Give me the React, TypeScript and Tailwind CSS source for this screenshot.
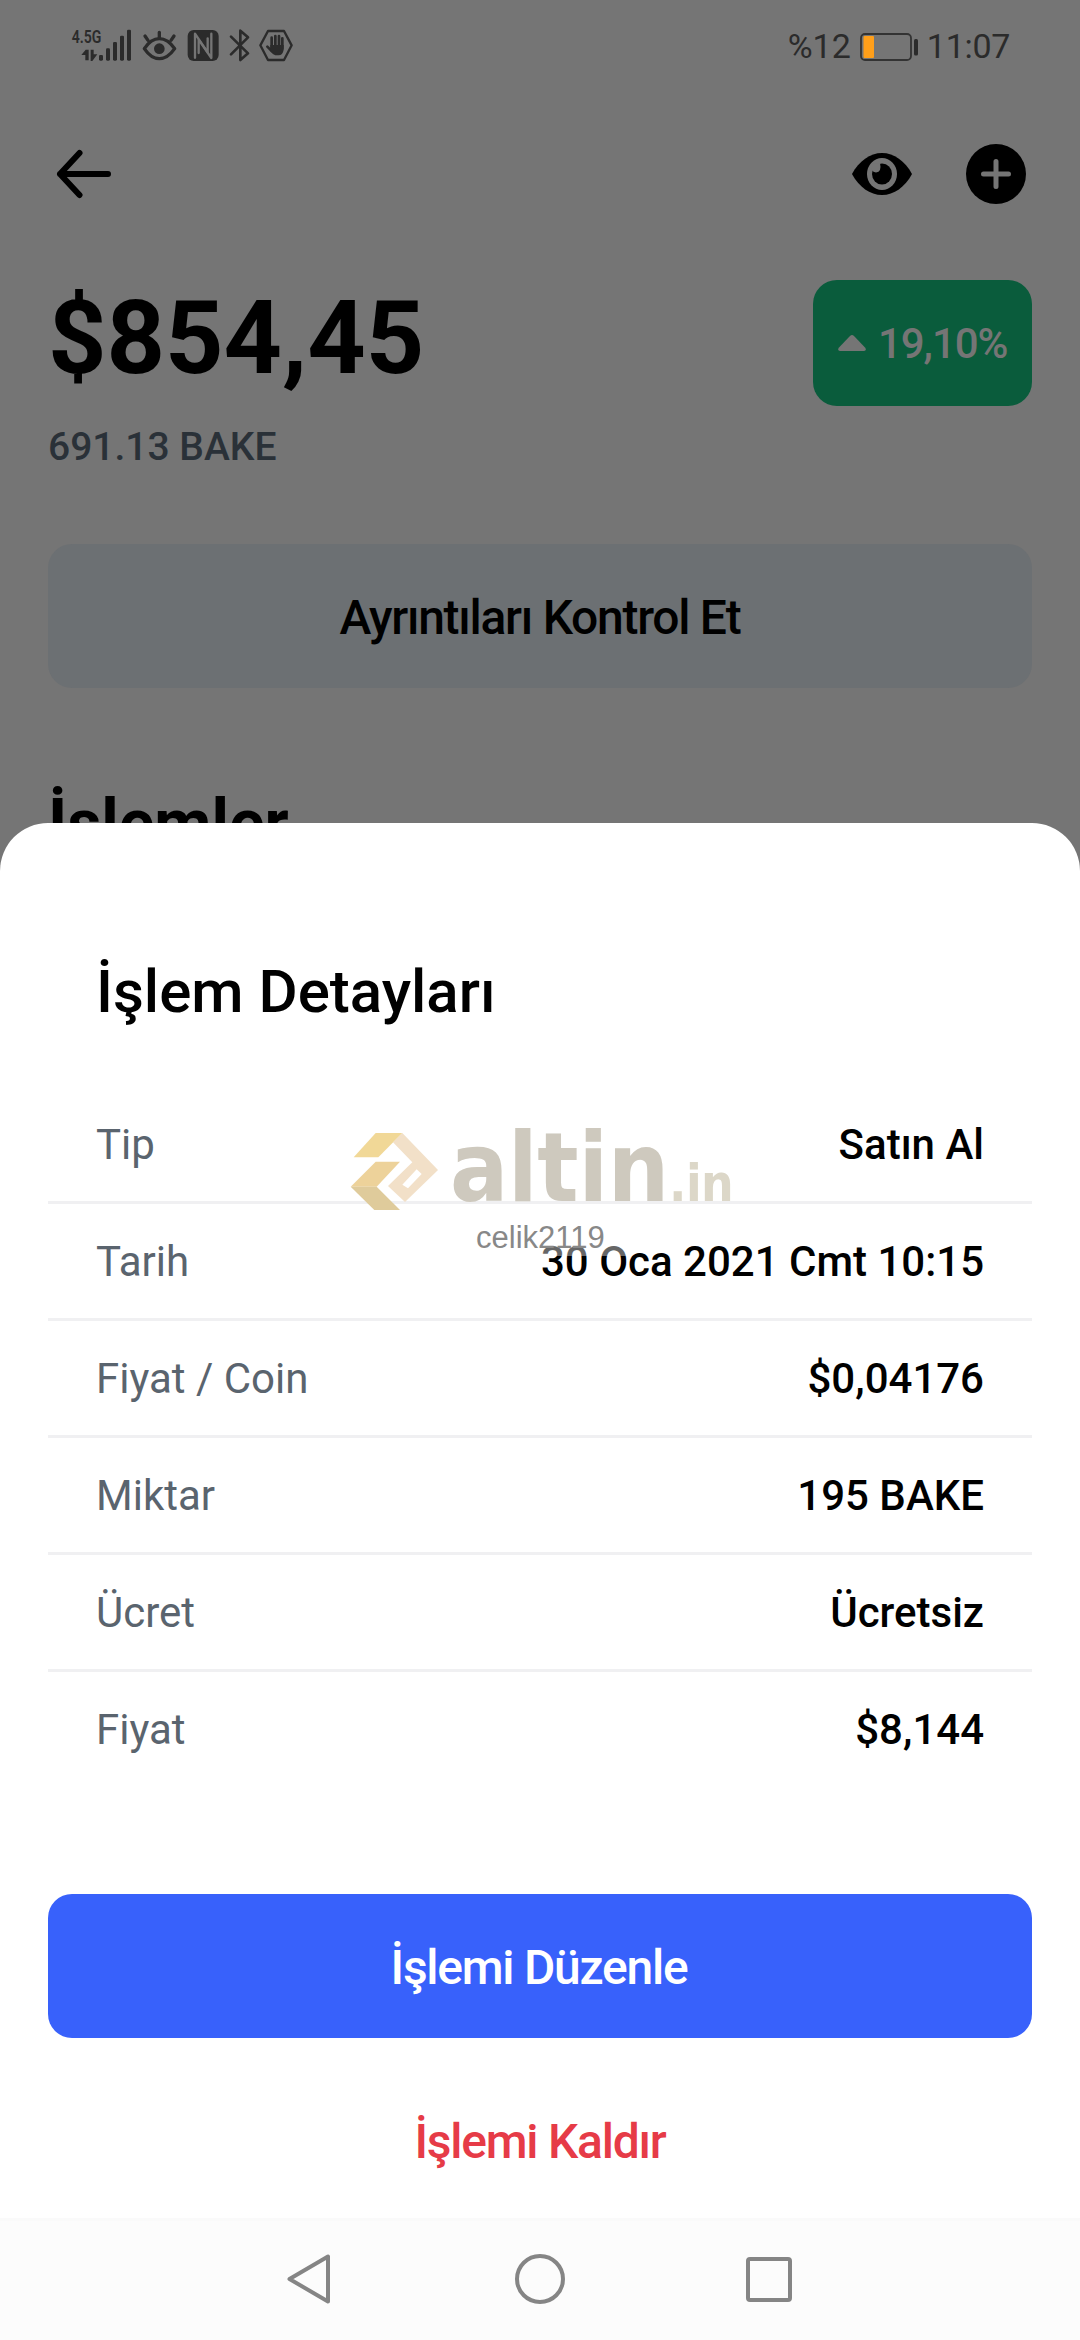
function StatusIcons() {
  return (
    <svg className="h-[47px] w-[227px]" viewBox="60 35 681 141" fill="none" stroke="#2b2b2b" strokeLinecap="round" strokeLinejoin="round">
      <text x="65" y="99" textLength="89" lengthAdjust="spacingAndGlyphs" fill="#2b2b2b" stroke="none" className="font-['Roboto'] font-semibold text-[57px]">4.5G</text>
      <g fill="#2b2b2b" stroke="none">
        <path d="M94 134 L107 118 H116 V150 H106 V134 Z" />
        <path d="M122 118 H131 V132 H142 L127 152 H122 Z" />
        <rect x="147" y="134" width="12" height="17" rx="4" />
        <rect x="168" y="114" width="12" height="37" rx="4" />
        <rect x="189" y="95" width="12" height="56" rx="4" />
        <rect x="210" y="76" width="12" height="75" rx="4" />
        <rect x="231" y="58" width="12" height="93" rx="4" />
      </g>
      <g strokeWidth="10">
        <path d="M283 115 Q303 85 328 85 Q353 85 374 115 Q353 145 328 145 Q303 145 283 115 Z" />
        <path d="M285 77 L294 90 M328 66 V82 M372 77 L363 90" />
        <circle cx="328" cy="115" r="16" fill="#2b2b2b" stroke="none" />
      </g>
      <rect x="413" y="59" width="93" height="93" rx="18" fill="#2b2b2b" stroke="none" />
      <path d="M435 142 V70 L473 126 V84" stroke="#757575" strokeWidth="7" />
      <path d="M484 70 V143 L446 88 V128" stroke="#757575" strokeWidth="7" />
      <path d="M543 79 L594 129 L571 149 V61 L594 81 L543 132" strokeWidth="8" />
      <path d="M631 105 L654 62 H702 L725 105 L702 149 H654 Z" strokeWidth="7" />
      <path d="M665 82 V112 M676 77 V108 M687 77 V108 M697 84 V114 M652 109 L666 123" strokeWidth="8" />
      <path d="M661 104 H701 V118 Q698 135 686 135 H676 Q668 133 661 122 Z" fill="#2b2b2b" stroke="none" />
    </svg>
  );
}

function Battery() {
  return (
    <svg className="ml-[9px] h-7 w-[59px]" viewBox="0 0 59 28" fill="none">
      <rect x="1" y="1" width="50" height="26" rx="4" stroke="#333" strokeWidth="1.8" />
      <rect x="3.5" y="3" width="10.5" height="22" rx="1" fill="#ff9f1a" />
      <rect x="54" y="6" width="4" height="16.5" rx="1.5" fill="#2b2b2b" />
    </svg>
  );
}

function BackArrow() {
  return (
    <svg className="h-[50px] w-14" viewBox="0 0 56 50" fill="none" stroke="#000" strokeWidth="6" strokeLinecap="round" strokeLinejoin="round">
      <path d="M52 25 H4 M23.5 4 L4 25 L23.5 46" />
    </svg>
  );
}

function Eye() {
  return (
    <svg className="h-[42px] w-[60px]" viewBox="0 0 60 42">
      <path d="M0 21 C7 8 18 0 30 0 C42 0 53 8 60 21 C53 34 42 42 30 42 C18 42 7 34 0 21 Z" />
      <ellipse cx="30" cy="21" rx="15" ry="16" fill="#757575" />
      <ellipse cx="30" cy="21" rx="10" ry="10.5" />
      <path d="M19 11 L28 10 Q30 19 24 19.5 Q20 19 19 15 Z" fill="#757575" />
    </svg>
  );
}

function Plus() {
  return (
    <svg className="h-[60px] w-[60px]" viewBox="0 0 60 60">
      <circle cx="30" cy="30" r="30" />
      <path d="M30 17.5 V42.5 M17.5 30 H42.5" stroke="#757575" strokeWidth="5" strokeLinecap="round" />
    </svg>
  );
}

function Watermark() {
  return (
    <div className="absolute left-[350px] top-[1120px] flex w-[390px] flex-col">
      <div className="flex items-start">
        <svg className="mt-[10px] h-[82px] w-[90px] shrink-0" viewBox="60 60 270 246">
          <path d="M137 69 H217 L145 142 H71 Z" fill="#f1d897" />
          <path d="M137 155 H210 L140 230 H62 Z" fill="#edd29a" />
          <path d="M62 230 H140 L210 300 H133 Z" fill="#dfcb9b" />
          <path fillRule="evenodd" d="M217 69 L324 180 L225 276 L174 228 L247 157 L189 97 Z M260 178 L217 224 L234 235 L275 192 Z" fill="#f2e0c8" />
        </svg>
        <div className="ml-[10px] flex items-baseline whitespace-nowrap font-['DejaVu_Sans_Condensed','DejaVu_Sans',sans-serif] font-bold">
          <span className="text-[96px] leading-[96px] tracking-[-0.25px] text-[#cec9be]">altin</span>
          <span className="text-[51px] leading-[51px] tracking-[-0.5px] text-[#dcd7c8]">.in</span>
        </div>
      </div>
      <div className="ml-[126px] mt-[7px] h-[33px] w-[151px] bg-white/40 font-['Liberation_Sans',sans-serif] text-[31px] leading-[30px] text-[#888]">
        celik2119
      </div>
    </div>
  );
}

const details = [
  ["Tip", "Satın Al"],
  ["Tarih", "30 Oca 2021 Cmt 10:15"],
  ["Fiyat / Coin", "$0,04176"],
  ["Miktar", "195 BAKE"],
  ["Ücret", "Ücretsiz"],
  ["Fiyat", "$8,144"],
];

export default function App() {
  return (
    <div className="relative h-[2340px] w-[1080px] overflow-hidden bg-[#757575] font-['Roboto',sans-serif] text-black">
      <div className="flex h-[93px] items-center justify-between pl-[70px] pr-[70px] text-[34px] text-[#2b2b2b]">
        <div className="-mt-[3px]">
          <StatusIcons />
        </div>
        <div className="flex items-center">
          <span>%12</span>
          <Battery />
          <span className="ml-2 tracking-[-0.3px]">11:07</span>
        </div>
      </div>

      <header className="flex h-[162px] items-center justify-between pl-[56px] pr-[54px]">
        <BackArrow />
        <div className="flex items-center gap-[54px]">
          <Eye />
          <Plus />
        </div>
      </header>

      <main className="px-12">
        <div className="flex justify-between">
          <div className="pt-[23px]">
            <div className="text-[102px] font-bold leading-[120px]">$854,45</div>
            <div className="mt-[25px] text-[39px] font-medium leading-[48px] text-[#2a3138]">691.13 BAKE</div>
          </div>
          <div className="mt-[25px] flex h-[126px] w-[219px] items-center rounded-3xl bg-[#0a5c3c] pl-[25px] text-[#757575]">
            <svg className="h-4 w-7 shrink-0" viewBox="0 0 28 16" fill="currentColor">
              <path d="M12 1 Q14 -0.8 16 1 L27 12.5 Q29 15.5 26 16 H2 Q-1 15.5 1 12.5 Z" />
            </svg>
            <span className="ml-3 text-[42px] font-medium tracking-[-1.06px]">19,10%</span>
          </div>
        </div>

        <button className="mt-[73px] flex h-36 w-full items-center justify-center rounded-3xl bg-[#6c7073] pt-[3px] text-[48px] font-medium tracking-[-1.28px]">
          Ayrıntıları Kontrol Et
        </button>

        <h2 className="mt-24 text-[66px] font-bold leading-[80px]">İşlemler</h2>
      </main>

      <section className="absolute inset-x-0 bottom-0 top-[823px] flex flex-col rounded-t-[48px] bg-white px-12 pt-[133px]">
        <h3 className="px-12 text-[60px] font-medium leading-[72px]">İşlem Detayları</h3>
        <dl className="mt-[59px]">
          {details.map(([label, value]) => (
            <div key={label} className="flex h-[117px] items-center justify-between border-b-[3px] border-[#f0f0f2] px-12 text-[42px] last:border-transparent">
              <dt className="text-[#5a646e]">{label}</dt>
              <dd className="font-medium">{value}</dd>
            </div>
          ))}
        </dl>
        <button className="mt-[105px] flex h-36 shrink-0 items-center justify-center rounded-3xl bg-[#3861fb] pr-[2px] pt-[3px] text-[48px] font-medium tracking-[-1.25px] text-white">
          İşlemi Düzenle
        </button>
        <button className="mt-[30px] flex h-36 shrink-0 items-center justify-center pt-[3px] text-[48px] font-medium tracking-[-1.25px] text-[#e63b47]">
          İşlemi Kaldır
        </button>
        <nav className="-mx-12 mt-[6px] flex h-[122px] shrink-0 items-center border-t-[3px] border-[#fafafa] bg-[#fcfcfc] pb-[3px] pl-[287px]">
          <svg className="h-[50px] w-11" viewBox="0 0 44 50" fill="none" stroke="#858585" strokeWidth="4" strokeLinejoin="round">
            <path d="M41 2.5 V47.5 L2.5 25 Z" />
          </svg>
          <span className="ml-[184px] h-[50px] w-[50px] rounded-full border-4 border-[#858585]" />
          <span className="ml-[181px] h-[45px] w-[46px] rounded-[4px] border-4 border-[#858585]" />
        </nav>
      </section>

      <Watermark />
    </div>
  );
}
